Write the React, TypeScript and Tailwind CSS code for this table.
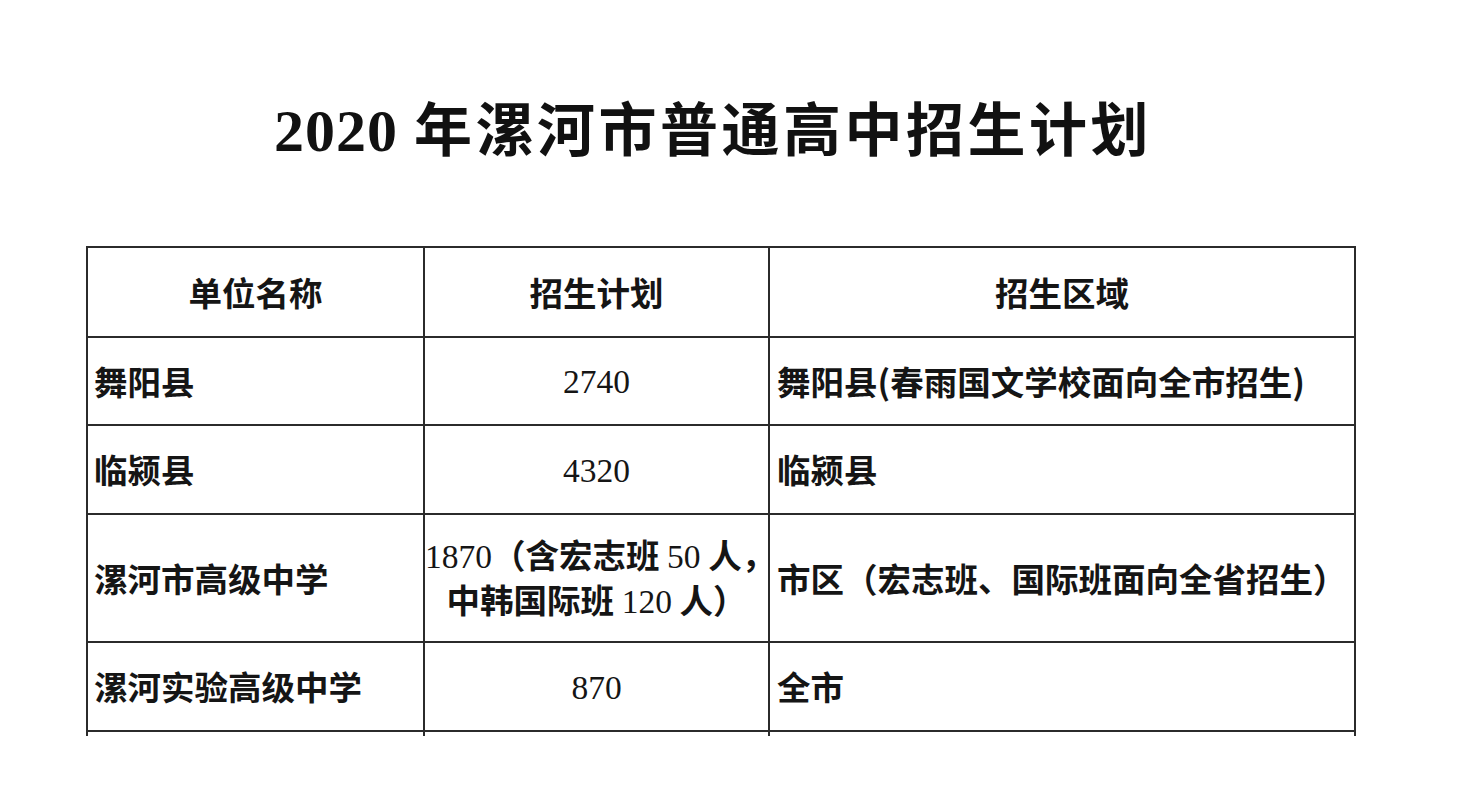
import React from "react";

const serif = { fontFamily: '"Liberation Serif", "Noto Sans CJK SC", serif' };
const cjk = { fontFamily: '"Noto Sans CJK SC", "Liberation Serif", sans-serif' };

function Num({ children }: { children: React.ReactNode }) {
  return (
    <span className="font-normal" style={serif}>
      {children}
    </span>
  );
}

export default function App() {
  const rows: { name: string; plan: React.ReactNode; area: string; h: string }[] = [
    { name: "舞阳县", plan: <Num>2740</Num>, area: "舞阳县(春雨国文学校面向全市招生)", h: "h-[88px]" },
    { name: "临颍县", plan: <Num>4320</Num>, area: "临颍县", h: "h-[89px]" },
    {
      name: "漯河市高级中学",
      plan: (
        <div className="leading-[42px]">
          <div>
            <Num>1870</Num>（含宏志班 <Num>50</Num> 人，
          </div>
          <div>
            中韩国际班 <Num>120</Num> 人）
          </div>
        </div>
      ),
      area: "市区（宏志班、国际班面向全省招生）",
      h: "h-[128px]",
    },
    { name: "漯河实验高级中学", plan: <Num>870</Num>, area: "全市", h: "h-[89px]" },
  ];

  const bd = "border-2 border-[#2b2b2b]";

  return (
    <div className="w-[1459px] h-[800px] bg-white overflow-hidden text-[#151515]" style={cjk}>
      <div className="w-[1426px] pt-[98px] h-[246px] text-center">
        <h1 className="text-[58px] leading-[66px] font-bold text-[#111]" style={serif}>
          <span className="tracking-[1px] text-[60px]">2020 </span>
          <span className="tracking-[3.5px]">年漯河市普通高中招生计划</span>
        </h1>
      </div>
      <div className="ml-[86px] w-[1290px] h-[490px] overflow-hidden">
        <table className="w-[1268px] table-fixed border-collapse text-[33.5px] font-semibold">
          <colgroup>
            <col className="w-[337px]" />
            <col className="w-[345px]" />
            <col className="w-[586px]" />
          </colgroup>
          <tbody>
            <tr className="h-[90px]">
              <td className={`${bd} text-center align-middle`}>单位名称</td>
              <td className={`${bd} text-center align-middle`}>招生计划</td>
              <td className={`${bd} text-center align-middle`}>招生区域</td>
            </tr>
            {rows.map((r) => (
              <tr key={r.name} className={r.h}>
                <td className={`${bd} pl-[6px] align-middle whitespace-nowrap`}>{r.name}</td>
                <td className={`${bd} text-center align-middle whitespace-nowrap`}>{r.plan}</td>
                <td className={`${bd} pl-[7px] align-middle whitespace-nowrap`}>{r.area}</td>
              </tr>
            ))}
            <tr className="h-[89px]">
              <td className={bd}></td>
              <td className={bd}></td>
              <td className={bd}></td>
            </tr>
          </tbody>
        </table>
      </div>
    </div>
  );
}
